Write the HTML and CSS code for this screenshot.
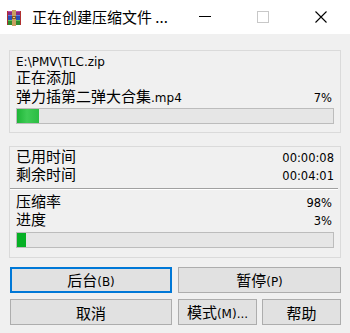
FILE: index.html
```html
<!DOCTYPE html>
<html lang="zh-CN">
<head>
<meta charset="utf-8">
<title>WinRAR</title>
<link rel="stylesheet" href="styles.css">
</head>
<body>
<div class="window">
  <div class="titlebar">
    <svg class="app-icon" width="16" height="16" viewBox="0 0 16 16">
      <rect x="1" y="1" width="14" height="4" fill="#8a2b7e"/>
      <rect x="1" y="1" width="14" height="1" fill="#c04aa8"/>
      <rect x="1" y="5" width="14" height="5" fill="#2a4fb8"/>
      <rect x="1" y="5" width="14" height="1" fill="#5a80e0"/>
      <rect x="1" y="10" width="14" height="5" fill="#2e8a2e"/>
      <rect x="1" y="10" width="14" height="1" fill="#5cc05c"/>
      <rect x="1" y="1" width="1" height="14" fill="#b03030"/>
      <rect x="14" y="1" width="1" height="14" fill="#b03030"/>
      <rect x="6" y="0" width="4" height="16" fill="#c8a060"/>
      <rect x="6" y="6" width="4" height="3" fill="#8a5a20"/>
      <rect x="7" y="7" width="2" height="1" fill="#f0d080"/>
    </svg>
    <span class="title">正在创建压缩文件 ...</span>
    <div class="caption-buttons">
      <span class="cap cap-min"><svg width="12" height="12" viewBox="0 0 12 12"><rect x="0" y="5" width="12" height="1" fill="#000"/></svg></span>
      <span class="cap cap-max"><svg width="12" height="12" viewBox="0 0 12 12"><rect x="0.5" y="0.5" width="11" height="11" fill="none" stroke="#c8c8c8"/></svg></span>
      <span class="cap cap-close"><svg width="12" height="12" viewBox="0 0 12 12"><path d="M0.5 0.5 L11.5 11.5 M11.5 0.5 L0.5 11.5" stroke="#000" stroke-width="1.1"/></svg></span>
    </div>
  </div>
  <div class="content">
    <div class="group group-file">
      <div class="line l1">E:\PMV\TLC.zip</div>
      <div class="line l2">正在添加</div>
      <div class="row l3"><span>弹力插第二弹大合集<span class="lat">.mp4</span></span><span class="val v1">7%</span></div>
      <div class="bar bar1"><div class="fill fill-anim" style="width:7%"></div></div>
    </div>
    <div class="group group-stats">
      <div class="row"><span>已用时间</span><span class="val">00:00:08</span></div>
      <div class="row"><span>剩余时间</span><span class="val">00:04:01</span></div>
      <div class="sep"></div>
      <div class="row"><span>压缩率</span><span class="val v1">98%</span></div>
      <div class="row"><span>进度</span><span class="val v1">3%</span></div>
      <div class="bar bar2"><div class="fill" style="width:3%"></div></div>
    </div>
    <div class="buttons">
      <div class="btn-row">
        <button class="btn btn-default">后台<span class="lat">(B)</span></button>
        <button class="btn">暂停<span class="lat">(P)</span></button>
      </div>
      <div class="btn-row">
        <button class="btn">取消</button>
        <div class="btn-pair">
          <button class="btn">模式<span class="lat">(M)...</span></button>
          <button class="btn">帮助</button>
        </div>
      </div>
    </div>
  </div>
</div>
</body>
</html>
```

FILE: styles.css
```css
html, body {
  margin: 0;
  padding: 0;
}
body {
  width: 350px;
  height: 333px;
  overflow: hidden;
  background: #f0f0f0;
  font-family: "Noto Sans CJK SC", "Noto Sans", sans-serif;
  font-size: 15px;
  color: #000;
}
.window {
  width: 350px;
  height: 333px;
  display: flex;
  flex-direction: column;
}
.titlebar {
  height: 34px;
  background: #ffffff;
  display: flex;
  align-items: center;
  flex-shrink: 0;
}
.app-icon {
  margin-left: 6px;
  margin-top: 1px;
  flex-shrink: 0;
}
.title {
  margin-left: 10px;
  font-size: 15px;
  line-height: 34px;
  flex: 1;
  white-space: nowrap;
}
.caption-buttons {
  display: flex;
  height: 34px;
}
.cap {
  width: 58px;
  height: 34px;
  display: flex;
  align-items: center;
  justify-content: center;
}
.cap svg { display: block; }
.cap-min svg { margin-top: 0; }
.content {
  padding: 16px 9px 0 9px;
  display: flex;
  flex-direction: column;
}
.lat {
  font-family: "DejaVu Sans", sans-serif;
  font-size: 12px;
}
.group {
  border: 1px solid #dadada;
  padding: 0 6px;
}
.group-file {
  padding-top: 4px;
  padding-bottom: 8px;
}
.line {
  white-space: nowrap;
}
.l1 {
  font-family: "DejaVu Sans", sans-serif;
  font-size: 12px;
  line-height: 14px;
  height: 14px;
}
.l2 {
  line-height: 16px;
  height: 16px;
}
.row {
  display: flex;
  justify-content: space-between;
  align-items: baseline;
  white-space: nowrap;
  line-height: 18px;
  height: 18px;
}
.l3 { margin-top: 2px; }
.val {
  font-family: "DejaVu Sans", sans-serif;
  font-size: 11.5px;
}
.v1 { padding-right: 2px; }
.bar {
  height: 14px;
  border: 1px solid #bcbcbc;
  background: #e6e6e6;
}
.bar1 { margin-top: 3px; }
.bar2 { margin-top: 4px; }
.fill {
  height: 100%;
  background: #06b025;
}
.fill-anim {
  background: linear-gradient(to right, #1db536 0%, #3fcb55 45%, #2cbd43 100%);
}
.group-stats {
  margin-top: 13px;
  padding-top: 0;
  padding-bottom: 9px;
}
.sep {
  margin: 5px -4px 2px -6px;
  height: 1px;
  background: #a0a0a0;
  border-bottom: 1px solid #ffffff;
}
.buttons {
  margin-top: 9px;
  margin-left: 1px;
  display: flex;
  flex-direction: column;
  gap: 6px;
}
.btn-row {
  display: grid;
  grid-template-columns: 162px 163px;
  gap: 6px;
}
.btn-pair {
  display: grid;
  grid-template-columns: 79px 79px;
  gap: 5px;
}
.btn {
  height: 26px;
  margin: 0;
  padding: 0;
  background: #e1e1e1;
  border: 1px solid #adadad;
  font-family: "Noto Sans CJK SC", "Noto Sans", sans-serif;
  font-size: 15px;
  color: #000;
  line-height: 23px;
  box-sizing: border-box;
  white-space: nowrap;
}
.btn-default {
  border: 2px solid #0078d7;
  line-height: 21px;
}
```
